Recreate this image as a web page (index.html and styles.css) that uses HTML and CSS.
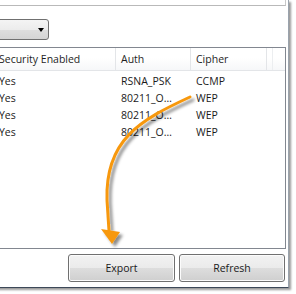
FILE: index.html
```html
<!DOCTYPE html>
<html>
<head>
<meta charset="utf-8">
<link rel="stylesheet" href="styles.css">
</head>
<body>
<div class="window">
  <div class="toppanel"></div>
  <div class="combo"><span class="combo-arrow"></span></div>
  <div class="list">
    <div class="row header">
      <div class="cell c1">Security Enabled</div>
      <div class="cell c2">Auth</div>
      <div class="cell c3">Cipher</div>
      <div class="cell c4"></div>
    </div>
    <div class="row">
      <div class="cell c1">Yes</div>
      <div class="cell c2">RSNA_PSK</div>
      <div class="cell c3">CCMP</div>
    </div>
    <div class="row">
      <div class="cell c1">Yes</div>
      <div class="cell c2">80211_O…</div>
      <div class="cell c3">WEP</div>
    </div>
    <div class="row">
      <div class="cell c1">Yes</div>
      <div class="cell c2">80211_O…</div>
      <div class="cell c3">WEP</div>
    </div>
    <div class="row">
      <div class="cell c1">Yes</div>
      <div class="cell c2">80211_O…</div>
      <div class="cell c3">WEP</div>
    </div>
  </div>
  <div class="buttons">
    <button class="btn">Export</button>
    <button class="btn">Refresh</button>
  </div>
</div>
<svg class="annot" width="296" height="294" viewBox="0 0 296 294">
  <defs>
    <filter id="sh" x="-20%" y="-20%" width="140%" height="140%">
      <feDropShadow dx="3" dy="3" stdDeviation="1.6" flood-color="#000" flood-opacity="0.45"/>
    </filter>
  </defs>
  <g filter="url(#sh)">
    <path d="M190 97 C140 120 105 140 107 200 L109 231" fill="none" stroke="#f7980f" stroke-width="3" stroke-linecap="round"/>
    <polygon points="101,229 120,232 112,244" fill="#f7980f"/>
  </g>
</svg>
</body>
</html>
```
FILE: styles.css
```css
html, body {
  margin: 0;
  padding: 0;
  background: #ffffff;
  overflow: hidden;
}
body {
  width: 296px;
  height: 294px;
  position: relative;
  font-family: "Open Sans", "Liberation Sans", sans-serif;
  font-size: 10.5px;
  color: #1a1a1a;
}
.window {
  box-sizing: border-box;
  width: 329px;
  height: 288px;
  margin-left: -40px;
  padding: 0 2px 5px 0;
  background: #ffffff;
  border-right: 1px solid #9aa3ad;
  border-bottom: 1px solid #3c4858;
  box-shadow: 2px 2px 2px rgba(0, 0, 0, 0.4);
  display: flex;
  flex-direction: column;
}
.toppanel {
  height: 5px;
  border-right: 1px solid #c9c9c9;
  border-bottom: 1px solid #b9b9b9;
  margin-right: 0;
}
.combo {
  box-sizing: border-box;
  margin-top: 13px;
  width: 89px;
  height: 21px;
  border: 1px solid #707070;
  border-radius: 3px;
  background: linear-gradient(#f4f4f4 0%, #ececec 50%, #dedede 51%, #d4d4d4 100%);
  display: flex;
  align-items: center;
  justify-content: flex-end;
  padding-right: 4px;
}
.combo-arrow {
  width: 0;
  height: 0;
  border-left: 3.5px solid transparent;
  border-right: 3.5px solid transparent;
  border-top: 4px solid #000;
}
.list {
  box-sizing: border-box;
  margin-top: 7px;
  height: 202px;
  border: 1px solid #828790;
  background: #fff;
}
.row {
  display: flex;
  height: 17px;
  align-items: center;
}
.row.header {
  height: 22px;
  background: linear-gradient(#ffffff 0%, #ffffff 45%, #f6f7f9 100%);
  border-bottom: 1px solid #e3e5e8;
  margin-bottom: 1px;
  align-items: stretch;
}
.cell {
  box-sizing: border-box;
  white-space: nowrap;
  overflow: hidden;
  padding-left: 5px;
}
.header .cell {
  display: flex;
  align-items: center;
  border-right: 1px solid #e3e5e8;
  color: #1e1e1e;
}
.c1 { width: 155px; padding-left: 38px; }
.c2 { width: 75px; }
.c3 { width: 76px; }
.c4 { width: 3px; }
.header .c4 { border-right: 1px solid #eceef0; }
.buttons {
  margin-top: 5px;
  height: 28px;
  display: flex;
  justify-content: flex-end;
  gap: 4px;
  padding-right: 1px;
}
.btn {
  box-sizing: border-box;
  height: 28px;
  width: 107px;
  font-family: "Open Sans", "Liberation Sans", sans-serif;
  font-size: 10.5px;
  color: #1a1a1a;
  border: 1px solid #707070;
  border-radius: 3px;
  background: linear-gradient(#f2f2f2 0%, #ebebeb 50%, #dddddd 51%, #cfcfcf 100%);
  box-shadow: inset 0 0 0 1px #fcfcfc;
  padding: 0;
}
.btn + .btn { width: 106px; }
.annot {
  position: absolute;
  left: 0;
  top: 0;
  pointer-events: none;
}
```
